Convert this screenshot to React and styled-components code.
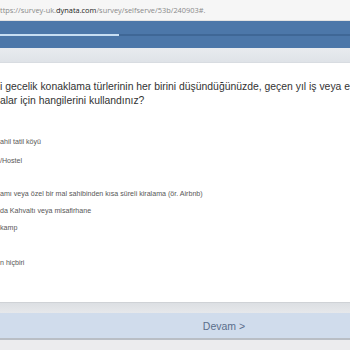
import React from 'react';
import styled, { createGlobalStyle } from 'styled-components';

const Global = createGlobalStyle`
  html, body { margin: 0; padding: 0; background: #fff; }
  body { width: 350px; height: 350px; overflow: hidden; }
`;

const Page = styled.div`
  width: 350px;
  height: 350px;
  display: flex;
  flex-direction: column;
  overflow: hidden;
  font-family: "Liberation Sans", Arial, sans-serif;
`;

const AddressBar = styled.div`
  height: 20px;
  flex: none;
  background: #f6f6f6;
  border-bottom: 1px solid #e2e2e2;
  display: flex;
  align-items: center;
  font-family: "Open Sans", "Noto Sans", sans-serif;
  font-size: 7.4px;
  color: #8a8a8a;
  white-space: nowrap;
  b { font-weight: 400; color: #222; }
`;

const Header = styled.div`
  height: 27px;
  flex: none;
  background: #4c77a9;
  display: flex;
  align-items: center;
`;

const Track = styled.div`
  flex: 1;
  height: 2px;
  background: #3f6796;
  display: flex;
`;

const Fill = styled.div`
  height: 2px;
  background: #c8def2;
`;

const SubBar = styled.div`
  height: 14px;
  flex: none;
  background: linear-gradient(#e8ebef, #dfe3e8);
  border-bottom: 1px solid #d8dce1;
`;

const Content = styled.div`
  flex: 1;
  background: #fff;
  padding-top: 17px;
  overflow: hidden;
`;

const Question = styled.div`
  font-size: 10.4px;
  line-height: 14px;
  color: #333;
  white-space: nowrap;
  margin-bottom: 30px;
`;

const Option = styled.div`
  font-size: 7.1px;
  line-height: 8px;
  color: #575757;
  white-space: nowrap;
  margin-top: ${p => p.gap}px;
`;

const Footer = styled.div`
  flex: none;
  display: flex;
  flex-direction: column;
`;

const FooterTop = styled.div`
  height: 10px;
  border-top: 1px solid #cfd2d6;
  background: linear-gradient(#dcdfe3, #e6e8eb);
`;

const Button = styled.div`
  height: 25px;
  background: #d0dcec;
  border-bottom: 2px solid #b9bec5;
  display: flex;
  align-items: center;
  justify-content: center;
  padding-left: 98px;
  font-family: "Liberation Sans", Arial, sans-serif;
  font-size: 10.5px;
  color: #5b6e8b;
`;

const FooterBottom = styled.div`
  height: 10px;
  background: #ececee;
`;

const options = [
  ['ahil tatil köyü', 1],
  ['/Hostel', 11],
  ['amı veya özel bir mal sahibinden kısa süreli kiralama (ör. Airbnb)', 25],
  ['da Kahvaltı veya misafirhane', 9],
  ['kamp', 9],
  ['n hiçbiri', 27],
];

export default function App() {
  return (
    <Page>
      <Global />
      <AddressBar>
        ttps://survey-uk.<b>dynata.com</b>/survey/selfserve/53b/240903#.
      </AddressBar>
      <Header>
        <Track>
          <Fill style={{ width: 119 }} />
        </Track>
      </Header>
      <SubBar />
      <Content>
        <Question>
          i gecelik konaklama türlerinin her birini düşündüğünüzde, geçen yıl iş veya e
          <br />
          alar için hangilerini kullandınız?
        </Question>
        {options.map(([t, g]) => (
          <Option key={t} gap={g}>{t}</Option>
        ))}
      </Content>
      <Footer>
        <FooterTop />
        <Button>Devam &gt;</Button>
        <FooterBottom />
      </Footer>
    </Page>
  );
}
